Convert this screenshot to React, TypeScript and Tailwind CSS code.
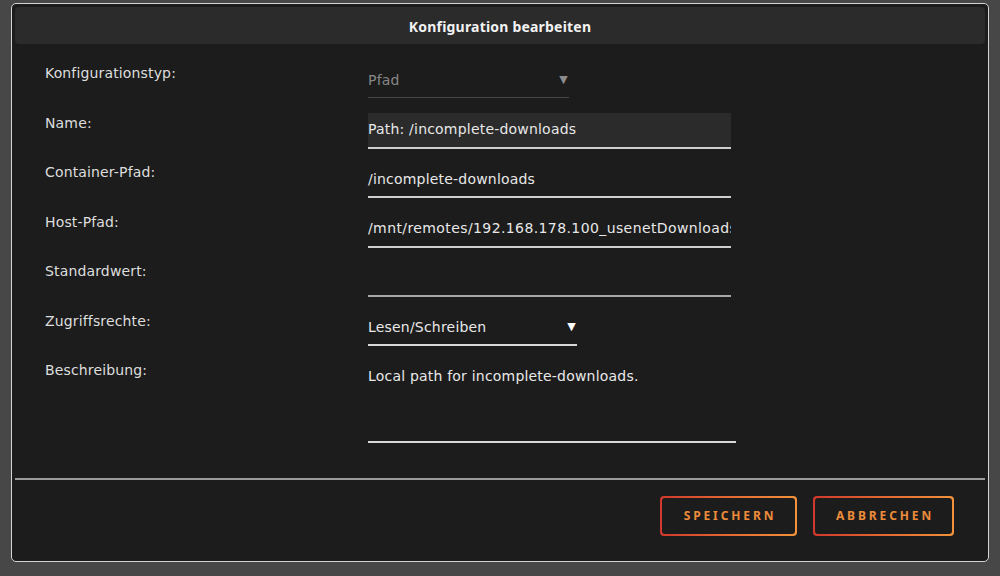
import React from "react";

const font = { fontFamily: '"DejaVu Sans", "Noto Sans", sans-serif' };
const titleFont = { fontFamily: '"Noto Sans", "Open Sans", sans-serif' };

function Label({ children }: { children: React.ReactNode }) {
  return (
    <div className="w-[323px] shrink-0 text-[14px] leading-[20px] tracking-[0.15px] text-[#dedede]">
      {children}
    </div>
  );
}

function GradButton({ children, w }: { children: React.ReactNode; w: string }) {
  return (
    <div className={`${w} h-[40px] rounded-[4px] p-[2px] bg-gradient-to-r from-[#d2372d] to-[#f2923a]`}>
      <div
        className="w-full h-full rounded-[3px] bg-[#1c1c1c] flex items-center justify-center text-[12px] font-bold tracking-[0.24em] text-[#ec8b3a] pl-[3px]"
        style={titleFont}
      >
        {children}
      </div>
    </div>
  );
}

export default function App() {
  return (
    <div className="w-[1000px] h-[576px] bg-[#474747] pt-[3px] pl-[11px] overflow-hidden" style={font}>
      <div className="w-[978px] h-[559px] rounded-[5px] border border-[#d4d4d4] bg-[#1c1c1c] p-[3px] flex flex-col">
        <div
          className="h-[37px] rounded-[4px] bg-[#2b2b2b] flex items-center justify-center pt-[2px] text-[14px] font-bold tracking-[0.2px] text-[#f2f2f2]"
          style={titleFont}
        >
          Konfiguration bearbeiten
        </div>

        <div className="flex flex-col gap-[13.5px] pt-[19px] pl-[30px]">
          <div className="flex h-[36px]">
            <Label>Konfigurationstyp:</Label>
            <div className="w-[201px] h-[35px] border-b border-[#474747] flex items-center justify-between text-[14px] tracking-[0.2px] text-[#878787] pt-[1px]">
              <span>Pfad</span>
              <span className="text-[11px] text-[#8c8c8c] pr-[1px]">▼</span>
            </div>
          </div>

          <div className="flex h-[36px]">
            <Label>Name:</Label>
            <div className="w-[363px] h-[36px] bg-[#2b2b2b] border-b-2 border-[#cfcfcf] flex items-center text-[14px] tracking-[0.2px] text-[#e8e8e8]">
              Path: /incomplete-downloads
            </div>
          </div>

          <div className="flex h-[36px]">
            <Label>Container-Pfad:</Label>
            <div className="w-[363px] h-[36px] border-b-2 border-[#cfcfcf] flex items-center text-[14px] tracking-[0.2px] text-[#e8e8e8]">
              /incomplete-downloads
            </div>
          </div>

          <div className="flex h-[36px]">
            <Label>Host-Pfad:</Label>
            <div className="w-[363px] h-[36px] border-b-2 border-[#cfcfcf] flex items-center text-[14px] tracking-[0.4px] text-[#e8e8e8] overflow-hidden whitespace-nowrap">
              /mnt/remotes/192.168.178.100_usenetDownloads
            </div>
          </div>

          <div className="flex h-[36px]">
            <Label>Standardwert:</Label>
            <div className="w-[363px] h-[36px] border-b-2 border-[#a8a8a8]"></div>
          </div>

          <div className="flex h-[36px]">
            <Label>Zugriffsrechte:</Label>
            <div className="w-[209px] h-[35px] border-b-2 border-[#d8d8d8] flex items-center justify-between text-[14px] tracking-[0.2px] text-[#e8e8e8]">
              <span>Lesen/Schreiben</span>
              <span className="text-[11px] text-white pr-[1px]">▼</span>
            </div>
          </div>

          <div className="flex h-[83px]">
            <Label>Beschreibung:</Label>
            <div className="w-[368px] h-[83px] border-b-2 border-[#d8d8d8] text-[14px] leading-[20px] tracking-[0.2px] text-[#e8e8e8] pt-[6px]">
              Local path for incomplete-downloads.
            </div>
          </div>
        </div>

        <div className="mt-[35px] h-[2px] bg-[#9a9a9a]"></div>

        <div className="flex justify-end gap-[16px] pt-[16px] pr-[31px]">
          <GradButton w="w-[137px]">SPEICHERN</GradButton>
          <GradButton w="w-[141px]">ABBRECHEN</GradButton>
        </div>
      </div>
    </div>
  );
}
